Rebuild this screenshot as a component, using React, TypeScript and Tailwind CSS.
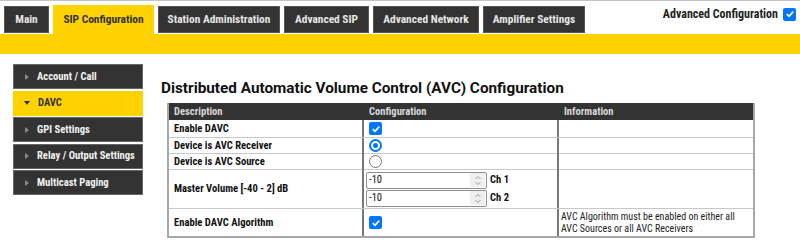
const tabs = [
  { label: "Main", w: "w-[45px]" },
  { label: "SIP Configuration", w: "w-[101px]", active: true },
  { label: "Station Administration", w: "w-[122px]" },
  { label: "Advanced SIP", w: "w-[85px]" },
  { label: "Advanced Network", w: "w-[106px]" },
  { label: "Amplifier Settings", w: "w-[102px]" },
];

const sideItems = ["Account / Call", "DAVC", "GPI Settings", "Relay / Output Settings", "Multicast Paging"];

function Check() {
  return (
    <span className="flex h-[13px] w-[13px] items-center justify-center rounded-[2px] bg-[#0075ff]">
      <svg width="10" height="10" viewBox="0 0 10 10">
        <path d="M1.8 5.2 L4 7.3 L8.3 2.6" fill="none" stroke="#fff" strokeWidth="1.7" />
      </svg>
    </span>
  );
}

function Radio({ checked }: { checked: boolean }) {
  return checked ? (
    <span className="flex h-[13px] w-[13px] items-center justify-center rounded-full border-2 border-[#0075ff]">
      <span className="h-[5px] w-[5px] rounded-full bg-[#0075ff]" />
    </span>
  ) : (
    <span className="block h-[13px] w-[13px] rounded-full border border-[#767676]" />
  );
}

function NumberBox({ value, label }: { value: string; label: string }) {
  return (
    <div className="flex items-center">
      <div className="flex h-[17px] w-[121px] items-center justify-between rounded-[2px] border border-[#8f8f8f] bg-white pl-[2px] font-normal">
        <span>{value}</span>
        <span className="mr-[1px] flex h-[14px] w-[15px] items-center justify-center bg-[#efefef]">
          <svg width="8" height="11" viewBox="0 0 8 11">
            <path d="M1.5 4 L4 1.5 L6.5 4 M1.5 7 L4 9.5 L6.5 7" fill="none" stroke="#9a9a9a" strokeWidth="1" />
          </svg>
        </span>
      </div>
      <span className="ml-[3px] font-bold">{label}</span>
    </div>
  );
}

function Row({
  h,
  desc,
  config,
  info,
  last,
}: {
  h: string;
  desc: string;
  config: React.ReactNode;
  info?: React.ReactNode;
  last?: boolean;
}) {
  return (
    <div className={`grid grid-cols-[195px_195px_1fr] ${h} ${last ? "" : "border-b border-[#c8c8c8]"}`}>
      <div className="flex items-center border-r-2 border-[#777] pl-[5px]">{desc}</div>
      <div className="flex items-center border-r-2 border-[#777] pl-[2px]">{config}</div>
      <div className="flex items-center pl-[2px]">{info}</div>
    </div>
  );
}

export default function App() {
  return (
    <div className="h-[248px] w-[800px] overflow-hidden border-t border-[#c4c4c4] bg-white font-['Roboto_Condensed',Roboto,sans-serif] text-[#222]">
      {/* top navigation */}
      <div className="flex h-[33px] items-end justify-between pl-[4px] pr-[4px]">
        <div className="flex items-end gap-[4px]">
          {tabs.map((t) =>
            t.active ? (
              <div
                key={t.label}
                className={`${t.w} flex h-[29px] items-center justify-center bg-[#ffd200] text-[11.4px] font-bold text-[#333]`}
              >
                {t.label}
              </div>
            ) : (
              <div
                key={t.label}
                className={`${t.w} mb-[1px] flex h-[27px] items-center justify-center border border-[#555] bg-[#333] text-[11.4px] font-bold text-[#e6e6e6]`}
              >
                {t.label}
              </div>
            )
          )}
        </div>
        <label className="mb-[11px] flex items-center gap-[5px] text-[12px] font-bold text-[#222]">
          Advanced Configuration
          <Check />
        </label>
      </div>
      <div className="h-[20px] bg-[#ffd200]" />

      <div className="flex pl-[13px] pt-[10px]">
        {/* side menu */}
        <nav className="flex w-[130px] flex-col gap-[1.5px] text-[10.6px] font-bold">
          {sideItems.map((s) =>
            s === "DAVC" ? (
              <div key={s} className="flex h-[25px] items-center bg-[#ffd200] text-[#333]">
                <svg className="ml-[11px] mr-[8px]" width="6" height="4" viewBox="0 0 6 4">
                  <path d="M0 0 H6 L3 4 Z" fill="#333" />
                </svg>
                {s}
              </div>
            ) : (
              <div key={s} className="flex h-[25px] items-center border border-[#666] bg-[#333] text-[#f2f2f2]">
                <svg className="ml-[11px] mr-[8px]" width="4" height="6" viewBox="0 0 4 6">
                  <path d="M0 0 V6 L4 3 Z" fill="#888" />
                </svg>
                {s}
              </div>
            )
          )}
        </nav>

        {/* content */}
        <main className="ml-[18px] pt-[15px]">
          <h1 className="font-['Roboto',sans-serif] text-[15.3px] font-bold leading-[18px] text-[#111]">
            Distributed Automatic Volume Control (AVC) Configuration
          </h1>
          <div className="ml-[6px] mt-[6px] w-[588px] border-x-2 border-b-2 border-[#a8a8a8] text-[10.6px] font-bold text-[#111]">
            <div className="grid h-[17px] grid-cols-[195px_195px_1fr] items-center bg-[#333] text-[#d8d8d8]">
              <div className="pl-[5px]">Description</div>
              <div className="pl-[5px]">Configuration</div>
              <div className="pl-[5px]">Information</div>
            </div>
            <Row h="h-[18px]" desc="Enable DAVC" config={<span className="ml-[3px]"><Check /></span>} />
            <Row h="h-[16px]" desc="Device is AVC Receiver" config={<span className="ml-[3px]"><Radio checked /></span>} />
            <Row h="h-[16px]" desc="Device is AVC Source" config={<span className="ml-[3px]"><Radio checked={false} /></span>} />
            <Row
              h="h-[39px]"
              desc="Master Volume [-40 - 2] dB"
              config={
                <div className="flex flex-col gap-[1px]">
                  <NumberBox value="-10" label="Ch 1" />
                  <NumberBox value="-10" label="Ch 2" />
                </div>
              }
            />
            <Row
              h="h-[27px]"
              last
              desc="Enable DAVC Algorithm"
              config={<span className="ml-[3px]"><Check /></span>}
              info={
                <span className="text-[10px] font-normal leading-[12px] text-[#222]">
                  AVC Algorithm must be enabled on either all
                  <br />
                  AVC Sources or all AVC Receivers
                </span>
              }
            />
          </div>
        </main>
      </div>
    </div>
  );
}
